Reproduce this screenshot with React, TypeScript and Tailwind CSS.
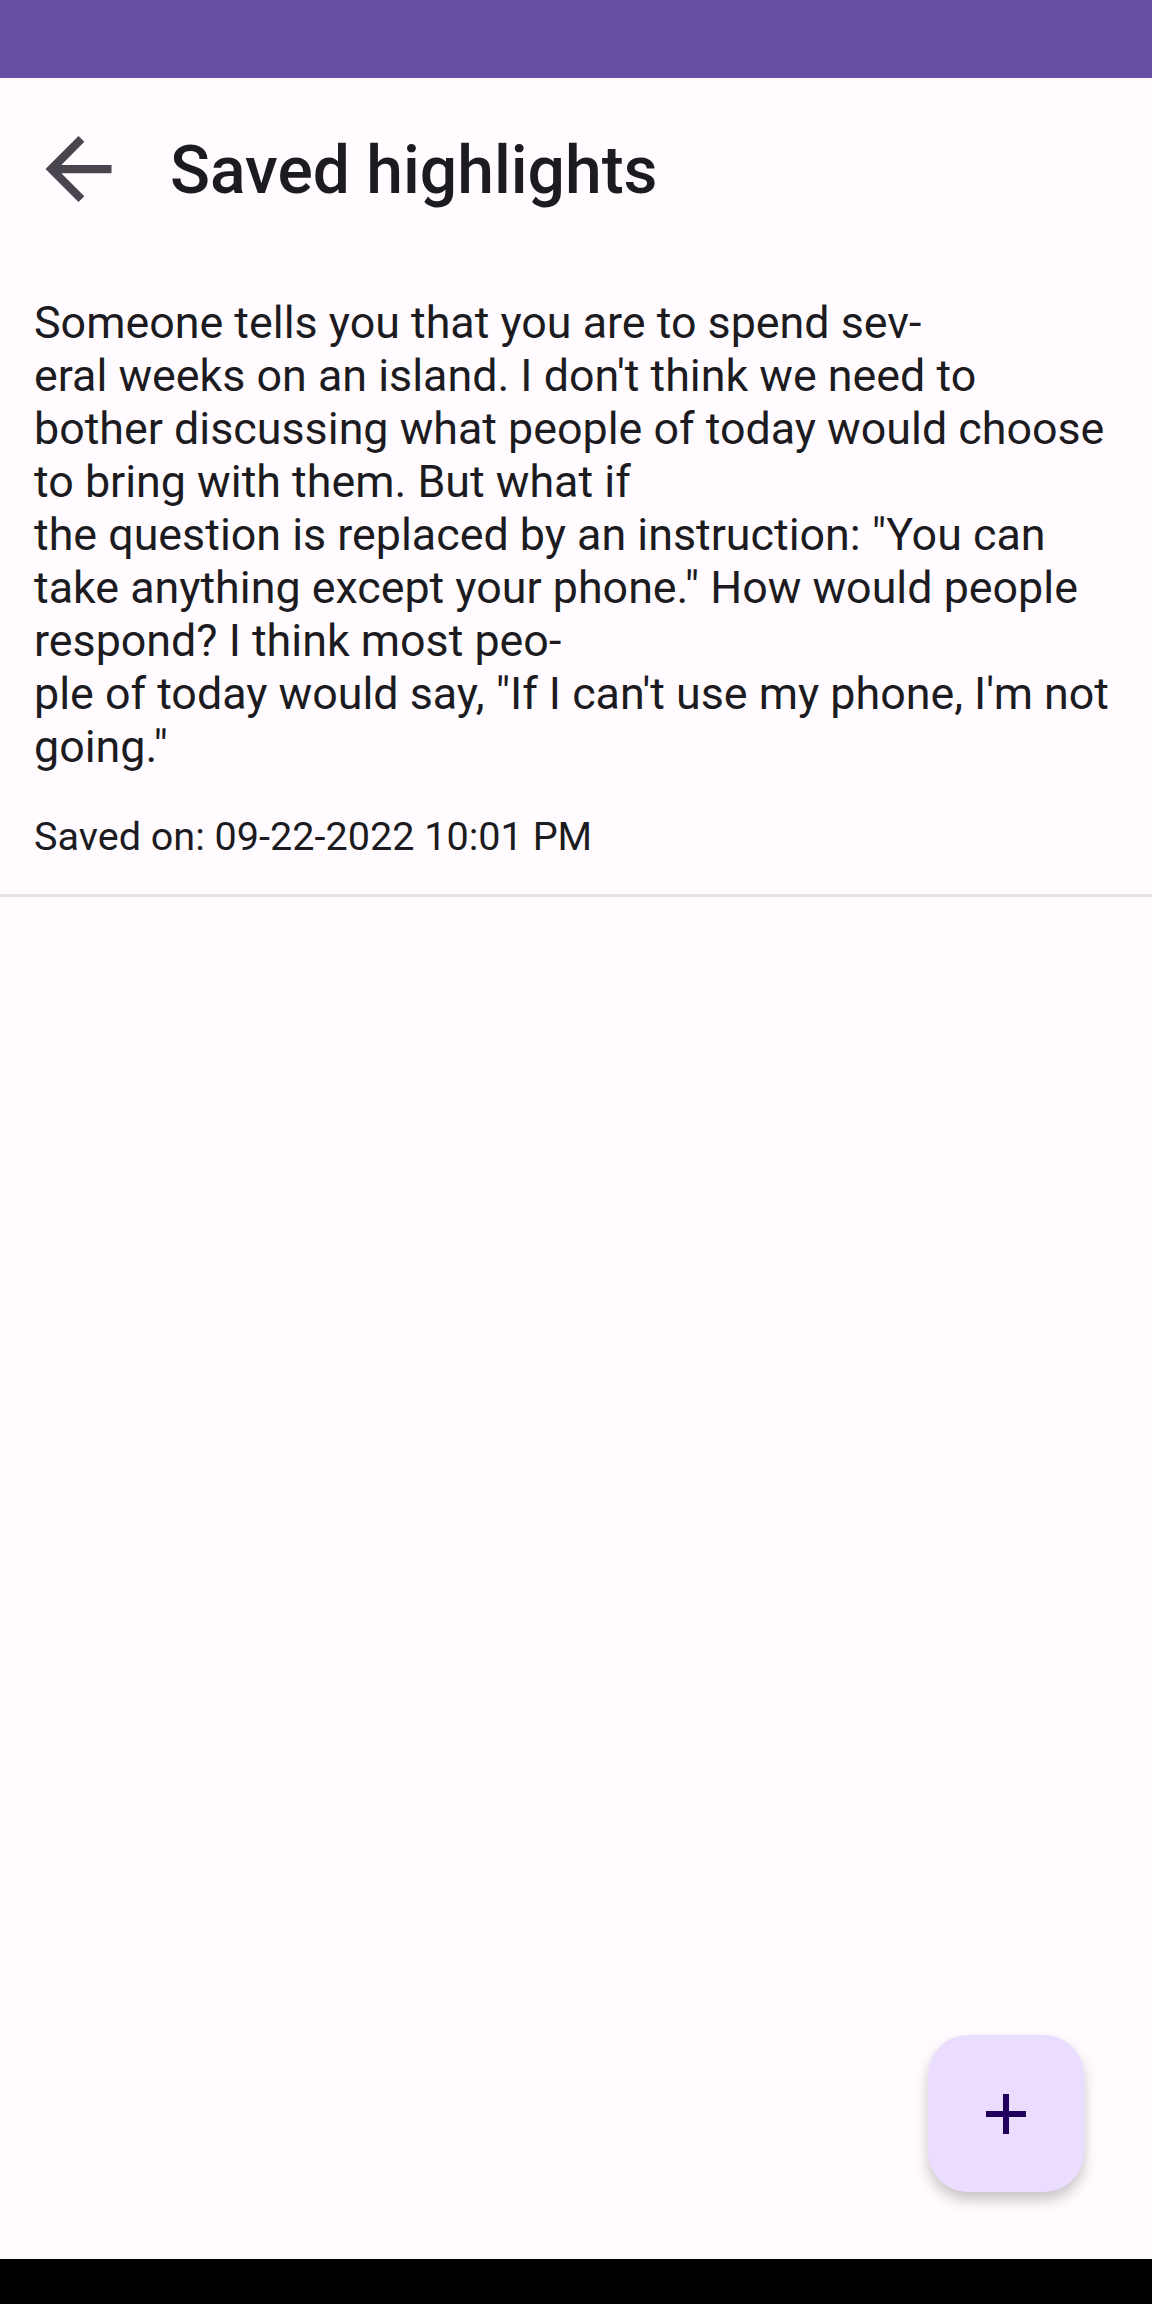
const LINES = [
  "Someone tells you that you are to spend sev-",
  "eral weeks on an island. I don't think we need to",
  "bother discussing what people of today would choose",
  "to bring with them. But what if",
  "the question is replaced by an instruction: \"You can",
  "take anything except your phone.\" How would people",
  "respond? I think most peo-",
  "ple of today would say, \"If I can't use my phone, I'm not",
  "going.\"",
];

function ArrowBack() {
  return (
    <svg viewBox="4 4 16 16" className="h-[66px] w-[67px]" fill="#49454F">
      <path d="M20 11H7.83l5.59-5.59L12 4l-8 8 8 8 1.41-1.41L7.83 13H20v-2z" />
    </svg>
  );
}

export default function App() {
  return (
    <div className="relative flex h-[2304px] w-[1152px] flex-col bg-[#FFFBFE] font-['Roboto',sans-serif] text-[#1C1B1F]">
      <div className="h-[78px] shrink-0 bg-[#6750A4]" />

      <header className="flex h-[182px] shrink-0 items-center">
        <div className="ml-[45px] flex items-center">
          <ArrowBack />
        </div>
        <h1 className="ml-[58px] pt-[4px] text-[66px] font-medium leading-none">Saved highlights</h1>
      </header>

      <section className="border-b-[3px] border-[#E6E1E5] px-[34px] pb-[33px] pt-[36px]">
        <p className="text-[44.8px] leading-[53px]">
          {LINES.map((line) => (
            <span key={line} className="block whitespace-pre">
              {line}
            </span>
          ))}
        </p>
        <p className="mt-[40px] text-[39.6px] leading-[48px]">Saved on: 09-22-2022 10:01 PM</p>
      </section>

      <div className="flex-1" />

      <div className="h-[45px] shrink-0 bg-black" />

      <button className="absolute bottom-[112px] right-[68px] flex h-[157px] w-[156px] items-center justify-center rounded-[40px] bg-[#EADDFF] shadow-[0_8px_14px_rgba(0,0,0,0.22)]">
        <svg viewBox="0 0 40 40" className="h-[40px] w-[40px]">
          <path d="M20 0v40M0 20h40" stroke="#21005D" strokeWidth="6" />
        </svg>
      </button>
    </div>
  );
}
